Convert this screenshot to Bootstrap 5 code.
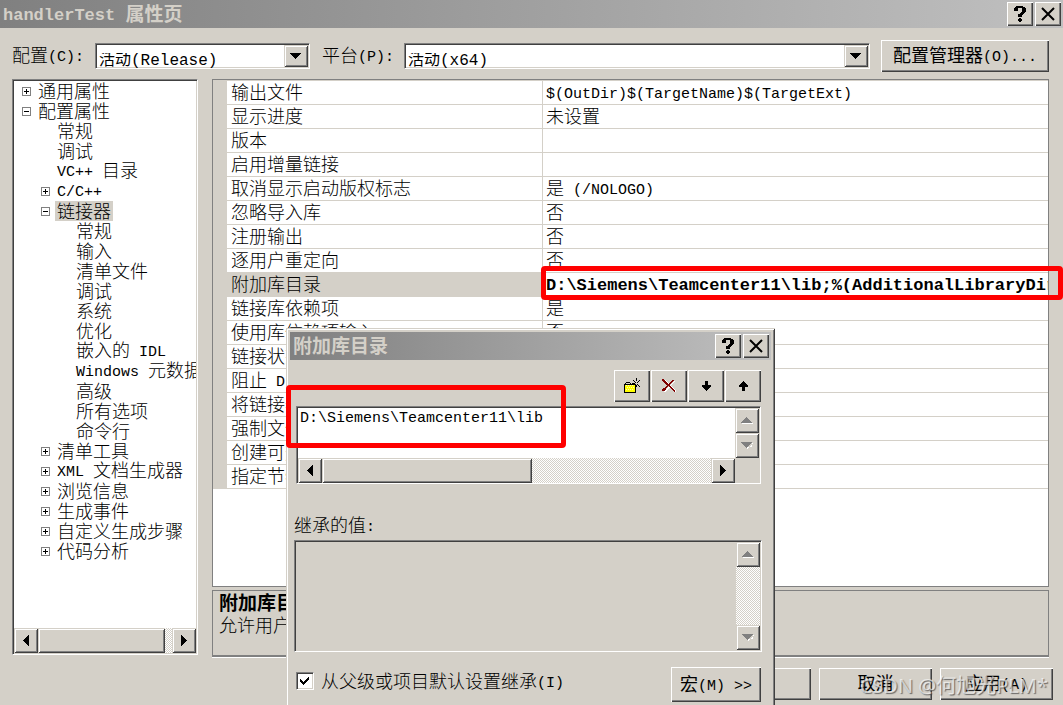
<!DOCTYPE html>
<html lang="zh-CN">
<head>
<meta charset="utf-8">
<meta name="viewport" content="width=device-width, initial-scale=1">
<title>handlerTest 属性页</title>
<link href="https://cdn.jsdelivr.net/npm/bootstrap@5.3.0/dist/css/bootstrap.min.css" rel="stylesheet">
<style>
:root { --face:#d4d0c8; --shade:#808080; --dark:#404040; --cjk:"Noto Sans CJK SC",sans-serif; --mono:"Liberation Mono","Noto Sans CJK SC",monospace; }
body { background:var(--face); color:#000; font-family:var(--cjk); font-size:18px; font-weight:300; line-height:24px; }
button, select, textarea, input { border-radius:0; color:#000; }
.lat { font-family:var(--mono); font-size:15px; line-height:1; white-space:pre; vertical-align:1px; }
.strong-text { font-weight:700; font-size:19px; }
.strong-text .lat, .lat.strong-val { font-size:17px; font-weight:700; }
.app-window { height:100vh; min-height:600px; }

/* caption bars */
.caption { height:28px; background:linear-gradient(90deg,#808080,#c0c0c0); color:var(--face); padding:0 2px 0 3px; flex:none; }
.caption .strong-text { padding-bottom:2px; }
.cap-btns { gap:2px; }
.cap-btn { width:26px; height:24px; }

/* raised controls */
.raised { background:var(--face); border:0; padding:0; box-shadow:inset 1px 1px #fff, inset -1px -1px var(--dark), inset -2px -2px var(--shade); display:flex; align-items:center; justify-content:center; flex:none; white-space:nowrap; }
.raised-soft { box-shadow:inset 1px 1px var(--face), inset -1px -1px var(--dark), inset 2px 2px #fff, inset -2px -2px var(--shade); }
.sunken { border:1px solid; border-color:var(--shade) #fff #fff var(--shade); box-shadow:inset 1px 1px var(--dark), inset -1px -1px var(--face); padding:1px; }
.push { height:32px; width:113px; padding-bottom:4px; }
.scroll-btn { width:24px; height:25px; }
.track { background:repeating-conic-gradient(#fff 0 25%,var(--face) 0 50%) 0 0/2px 2px; }
svg { display:block; shape-rendering:crispEdges; }

/* drop-downs */
.toolbar-row { height:51px; padding:4px 14px 0 12px; }
.toolbar-row label { padding-bottom:3px; }
.toolbar-row .manager { width:168px; margin-left:11px; }
.lbl-a { width:83px; }
.lbl-b { width:82px; margin-left:12px; }
.combo { position:relative; height:26px; background:#fff; }
.combo-a { width:215px; flex:none; }
.combo select { appearance:none; border:0; background:transparent; width:100%; height:100%; padding:0 26px 6px 2px; font:16px/16px var(--mono); outline:0; }
.combo .drop { position:absolute; right:1px; top:1px; bottom:1px; width:24px; pointer-events:none; }

/* tree */
.work { padding:0 14px 0 12px; gap:14px; min-height:0; }
.tree-pane { width:186px; background:#fff; margin-bottom:2px; flex:none; }
.tree { overflow:hidden; }
.tree ul { padding-left:19px; list-style:none; margin:0; }
.tree > ul { padding-left:8px; }
.node { display:flex; align-items:center; height:20px; gap:5px; white-space:nowrap; }
.node a { color:#000; text-decoration:none; padding:0 2px 2px; line-height:18px; }
.node a.picked { background:var(--face); }
.leaf { padding-left:14px; }
.tw { width:9px; height:9px; padding:0; border:1px solid var(--shade); background:#fff; flex:none; }

/* property grid */
.grid-pane { border:1px solid var(--shade); background:#fff; min-height:0; }
.props { table-layout:fixed; border-collapse:separate; border-spacing:0; border-top:1px solid var(--face); }
.props th, .props td { height:24px; padding:0 0 2px 4px; line-height:21px; font-weight:300; border-bottom:1px solid var(--face); white-space:nowrap; overflow:hidden; }
.props th { border-right:1px solid var(--face); }
.props td.gutter { background:var(--face); padding:0; }
.props tr.current th { background:var(--face); }
.props td { padding-left:3px; }
.help-pane { height:67px; margin-top:3px; border:1px solid var(--shade); border-bottom:2px solid var(--shade); box-shadow:0 1px #fff; padding:0 6px; line-height:22px; flex:none; overflow:hidden; white-space:nowrap; }
.foot { height:48px; padding:11px 10px 0 0; gap:8px; flex:none; }

/* list editor dialog */
.editor { position:absolute; left:286px; top:328px; bottom:0; width:489px; background:var(--face); padding:4px 4px 0; box-shadow:inset 1px 1px var(--face), inset -1px 0 var(--dark), inset 2px 2px #fff, inset -2px 0 var(--shade); overflow:hidden; }
.ed-body { padding:10px 10px 0 6px; }
.tool { width:36px; height:32px; }
.editor textarea { border:0; resize:none; outline:0; background:transparent; font:15px/21px var(--mono); padding:0 2px; overflow:hidden; }
.list-box { height:78px; margin-left:4px; background:#fff; }
.ed-body .list-box { margin-left:0; }
.corner { width:24px; background:var(--face); flex:none; }
.inh-label { margin-top:28px; margin-left:-2px; }
.inherited { height:112px; margin-top:4px; margin-left:-2px; margin-right:-1px; }
.inherit-row { margin-top:15px; }
.check-line { height:28px; gap:7px; }
.check-line label { padding-bottom:2px; }
.tick { appearance:none; width:18px; height:18px; background:#fff url("data:image/svg+xml,%3Csvg xmlns='http://www.w3.org/2000/svg' viewBox='0 0 18 18' shape-rendering='crispEdges'%3E%3Cpath d='M4 7h1v1h1v1h1v1h1V9h1V8h1V7h1V6h1V5h1v3h-1v1h-1v1h-1v1H9v1H8v1H7v-1H6v-1H5v-1H4z'/%3E%3C/svg%3E") -1px -1px/18px 18px no-repeat; }
.macro { width:90px; height:35px; padding-bottom:4px; }

/* markers and watermark */
.marker { position:absolute; border:5px solid #f00; border-radius:4px; pointer-events:none; }
.marker-value { left:328px; right:-15px; top:186px; height:34px; }
.marker-path { left:286px; top:385px; width:280px; height:63px; }
.watermark { position:absolute; right:15px; bottom:7px; font:400 20px/24px "Noto Sans","Noto Sans CJK SC",sans-serif; color:rgba(255,255,255,.65); text-shadow:1px 1px 1px rgba(70,70,70,.75); pointer-events:none; }
</style>
<script src="https://cdn.jsdelivr.net/npm/bootstrap@5.3.0/dist/js/bootstrap.bundle.min.js"></script>
</head>
<body class="overflow-hidden">
<svg class="d-none" aria-hidden="true">
  <symbol id="i-help" viewBox="0 0 14 18"><path d="M3 1h7v1h2v1h1v4h-1v1h-1v1h-1v1H9v2H5V9h2V8h1V7h1V3H5v3H1V3h1V2h1zM5 14h1v-1h2v1h1v2H8v1H6v-1H5z"/></symbol>
  <symbol id="i-close" viewBox="0 0 14 14"><path d="M1 1l12 12M13 1L1 13" stroke="#000" stroke-width="2" shape-rendering="auto"/></symbol>
  <symbol id="i-down" viewBox="0 0 12 6"><path d="M0 0h11v1h-1v1H9v1H8v1H7v1H6v1H5V5H4V4H3V3H2V2H1V1H0z"/></symbol>
  <symbol id="i-left" viewBox="0 0 6 12"><path d="M6 0v11H5v-1H4V9H3V8H2V7H1V6H0V5h1V4h1V3h1V2h1V1h1V0z"/></symbol>
  <symbol id="i-right" viewBox="0 0 6 12"><path d="M0 0v11h1v-1h1V9h1V8h1V7h1V6h1V5H5V4H4V3H3V2H2V1H1V0z"/></symbol>
  <symbol id="i-up-off" viewBox="0 0 12 8"><path fill="#fff" d="M1 6h11v1H1z"/><path fill="#808080" d="M5 0h1v1h1v1h1v1h1v1h1v1h1v1H0V5h1V4h1V3h1V2h1V1h1z"/></symbol>
  <symbol id="i-down-off" viewBox="0 0 12 8"><path fill="#fff" d="M11 1h1v1h-1v1h-1v1H9v1H8v1H7v1H6V6H5V5h6z"/><path fill="#808080" d="M0 0h11v1h-1v1H9v1H8v1H7v1H6v1H5V5H4V4H3V3H2V2H1V1H0z"/></symbol>
  <symbol id="i-plus" viewBox="0 0 7 7"><path d="M1 3h2V1h1v2h2v1H4v2H3V4H1z"/></symbol>
  <symbol id="i-minus" viewBox="0 0 7 7"><path d="M1 3h5v1H1z"/></symbol>
</svg>

<div class="app-window d-flex flex-column position-relative">
  <header class="caption d-flex align-items-center">
    <div class="strong-text me-auto"><span class="lat">handlerTest </span>属性页</div>
    <div class="cap-btns d-flex">
      <button class="raised cap-btn" type="button" aria-label="帮助"><svg width="14" height="18"><use href="#i-help"/></svg></button>
      <button class="raised cap-btn" type="button" aria-label="关闭"><svg width="14" height="14"><use href="#i-close"/></svg></button>
    </div>
  </header>

  <div class="toolbar-row d-flex align-items-center flex-shrink-0">
    <label class="lbl-a" for="cfg">配置<span class="lat">(C):</span></label>
    <div class="combo sunken combo-a">
      <select id="cfg"><option>活动(Release)</option></select>
      <span class="raised raised-soft drop"><svg width="12" height="6"><use href="#i-down"/></svg></span>
    </div>
    <label class="lbl-b" for="plat">平台<span class="lat">(P):</span></label>
    <div class="combo sunken flex-grow-1">
      <select id="plat"><option>活动(x64)</option></select>
      <span class="raised raised-soft drop"><svg width="12" height="6"><use href="#i-down"/></svg></span>
    </div>
    <button class="raised push manager" type="button"><span>配置管理器<span class="lat">(O)...</span></span></button>
  </div>

  <main class="work d-flex flex-grow-1">
    <nav class="tree-pane sunken d-flex flex-column" aria-label="属性类别">
      <div class="tree flex-grow-1">
        <ul>
          <li><div class="node"><button class="tw" type="button" aria-label="展开"><svg width="7" height="7"><use href="#i-plus"/></svg></button><a href="#">通用属性</a></div></li>
          <li><div class="node"><button class="tw" type="button" aria-label="折叠"><svg width="7" height="7"><use href="#i-minus"/></svg></button><a href="#">配置属性</a></div>
            <ul>
              <li class="node leaf"><a href="#">常规</a></li>
              <li class="node leaf"><a href="#">调试</a></li>
              <li class="node leaf"><a href="#"><span class="lat">VC++ </span>目录</a></li>
              <li class="node"><button class="tw" type="button" aria-label="展开"><svg width="7" height="7"><use href="#i-plus"/></svg></button><a href="#"><span class="lat">C/C++</span></a></li>
              <li><div class="node"><button class="tw" type="button" aria-label="折叠"><svg width="7" height="7"><use href="#i-minus"/></svg></button><a class="picked" href="#">链接器</a></div>
                <ul>
                  <li class="node leaf"><a href="#">常规</a></li>
                  <li class="node leaf"><a href="#">输入</a></li>
                  <li class="node leaf"><a href="#">清单文件</a></li>
                  <li class="node leaf"><a href="#">调试</a></li>
                  <li class="node leaf"><a href="#">系统</a></li>
                  <li class="node leaf"><a href="#">优化</a></li>
                  <li class="node leaf"><a href="#">嵌入的<span class="lat"> IDL</span></a></li>
                  <li class="node leaf"><a href="#"><span class="lat">Windows </span>元数据</a></li>
                  <li class="node leaf"><a href="#">高级</a></li>
                  <li class="node leaf"><a href="#">所有选项</a></li>
                  <li class="node leaf"><a href="#">命令行</a></li>
                </ul>
              </li>
              <li class="node"><button class="tw" type="button" aria-label="展开"><svg width="7" height="7"><use href="#i-plus"/></svg></button><a href="#">清单工具</a></li>
              <li class="node"><button class="tw" type="button" aria-label="展开"><svg width="7" height="7"><use href="#i-plus"/></svg></button><a href="#"><span class="lat">XML </span>文档生成器</a></li>
              <li class="node"><button class="tw" type="button" aria-label="展开"><svg width="7" height="7"><use href="#i-plus"/></svg></button><a href="#">浏览信息</a></li>
              <li class="node"><button class="tw" type="button" aria-label="展开"><svg width="7" height="7"><use href="#i-plus"/></svg></button><a href="#">生成事件</a></li>
              <li class="node"><button class="tw" type="button" aria-label="展开"><svg width="7" height="7"><use href="#i-plus"/></svg></button><a href="#">自定义生成步骤</a></li>
              <li class="node"><button class="tw" type="button" aria-label="展开"><svg width="7" height="7"><use href="#i-plus"/></svg></button><a href="#">代码分析</a></li>
            </ul>
          </li>
        </ul>
      </div>
      <div class="track d-flex flex-shrink-0">
        <button class="raised raised-soft scroll-btn" type="button" aria-label="向左滚动"><svg width="6" height="12"><use href="#i-left"/></svg></button>
        <div class="raised raised-soft" style="width:70%"></div>
        <button class="raised raised-soft scroll-btn ms-auto" type="button" aria-label="向右滚动"><svg width="6" height="12"><use href="#i-right"/></svg></button>
      </div>
    </nav>

    <section class="d-flex flex-column flex-grow-1 overflow-visible" style="min-width:0">
      <div class="grid-pane flex-grow-1 position-relative">
        <table class="props w-100">
          <colgroup><col style="width:14px"><col style="width:316px"><col></colgroup>
          <tbody>
            <tr><td class="gutter"></td><th scope="row">输出文件</th><td><span class="lat">$(OutDir)$(TargetName)$(TargetExt)</span></td></tr>
            <tr><td class="gutter"></td><th scope="row">显示进度</th><td>未设置</td></tr>
            <tr><td class="gutter"></td><th scope="row">版本</th><td></td></tr>
            <tr><td class="gutter"></td><th scope="row">启用增量链接</th><td></td></tr>
            <tr><td class="gutter"></td><th scope="row">取消显示启动版权标志</th><td>是<span class="lat"> (/NOLOGO)</span></td></tr>
            <tr><td class="gutter"></td><th scope="row">忽略导入库</th><td>否</td></tr>
            <tr><td class="gutter"></td><th scope="row">注册输出</th><td>否</td></tr>
            <tr><td class="gutter"></td><th scope="row">逐用户重定向</th><td>否</td></tr>
            <tr class="current"><td class="gutter"></td><th scope="row">附加库目录</th><td><span class="lat strong-val">D:\Siemens\Teamcenter11\lib;%(AdditionalLibraryDirectories)</span></td></tr>
            <tr><td class="gutter"></td><th scope="row">链接库依赖项</th><td>是</td></tr>
            <tr><td class="gutter"></td><th scope="row">使用库依赖项输入</th><td>否</td></tr>
            <tr><td class="gutter"></td><th scope="row">链接状态</th><td></td></tr>
            <tr><td class="gutter"></td><th scope="row">阻止<span class="lat"> Dll </span>绑定</th><td></td></tr>
            <tr><td class="gutter"></td><th scope="row">将链接器警告视为错误</th><td></td></tr>
            <tr><td class="gutter"></td><th scope="row">强制文件输出</th><td></td></tr>
            <tr><td class="gutter"></td><th scope="row">创建可热修补映像</th><td></td></tr>
            <tr><td class="gutter"></td><th scope="row">指定节特性</th><td></td></tr>
          </tbody>
        </table>
        <div class="marker marker-value"></div>
      </div>
      <div class="help-pane">
        <div class="strong-text">附加库目录</div>
        <div>允许用户重写环境库路径</div>
      </div>
    </section>
  </main>

  <footer class="foot d-flex justify-content-end">
    <button class="raised push" type="button" aria-label="确定"></button>
    <button class="raised push" type="button">取消</button>
    <button class="raised push" type="button"><span>应用<span class="lat">(A)</span></span></button>
  </footer>

  <section class="editor" role="dialog" aria-labelledby="ed-title">
    <div class="caption d-flex align-items-center">
      <div id="ed-title" class="strong-text me-auto">附加库目录</div>
      <div class="cap-btns d-flex">
        <button class="raised cap-btn" type="button" aria-label="帮助"><svg width="14" height="18"><use href="#i-help"/></svg></button>
        <button class="raised cap-btn" type="button" aria-label="关闭"><svg width="14" height="14"><use href="#i-close"/></svg></button>
      </div>
    </div>
    <div class="ed-body">
      <div class="d-flex justify-content-end" style="gap:1px">
        <button class="raised tool" type="button" aria-label="新行"><svg width="16" height="16" viewBox="0 0 16 16"><path fill="#ff0" d="M1 6h11v8H1z"/><path fill="#fff" opacity=".7" d="M2 7h1v1H2zM4 7h1v1H4zM6 7h1v1H6zM8 7h1v1H8zM3 9h1v1H3zM5 9h1v1H5zM7 9h1v1H7zM9 9h1v1H9zM2 11h1v1H2zM4 11h1v1H4zM6 11h1v1H6zM8 11h1v1H8z"/><path d="M1 5h1V4h4v1h1v1h5v9H0V6h1zM1 7v7h10V7zM2 5v1h4V5z" fill-rule="evenodd"/><path d="M12 0h1v3h-1zM9 2h1v1H9zM10 3h1v1h-1zM8 5h3v1H8zM14 3h1v1h-1zM15 2h1v1h-1zM13 4h1v1h-1zM11 4h1v1h-1zM13 6h1v1h-1zM14 7h1v1h-1zM15 8h1v1h-1zM13 9h-1V7h1z"/></svg></button>
        <button class="raised tool" type="button" aria-label="删除"><svg width="14" height="14" viewBox="0 0 14 14"><path fill="#fff" d="M3 1l5 5 5-5v1L9 6l5 6v1L8 8l-5 5H2l5-6z"/><path fill="#800000" d="M0 0h2v1h1v1h1v1h1v1h1v1h1V4h1V3h1V2h1V1h2v1h-1v1h-1v1H9v1H8v2h1v1h1v1h1v1h1v1h1v2h-1v-1h-1v-1h-1v-1H9V9H8V8H7V7H6v1H5v1H4v2H3v1H0v-2h1V9h2V8h1V7h1V6H4V5H3V4H2V3H1V2H0z"/></svg></button>
        <button class="raised tool" type="button" aria-label="下移"><svg width="9" height="10" viewBox="0 0 9 10"><path d="M3 0h3v4h3v2H8v1H7v1H6v1H5v1H4V9H3V8H2V7H1V6H0V4h3z"/></svg></button>
        <button class="raised tool" type="button" aria-label="上移"><svg width="9" height="10" viewBox="0 0 9 10"><path d="M3 10h3V6h3V4H8V3H7V2H6V1H5V0H4v1H3v1H2v1H1v1H0v2h3z"/></svg></button>
      </div>
      <div class="list-box sunken d-flex flex-column mt-1">
        <div class="d-flex flex-grow-1">
          <textarea class="flex-grow-1" rows="2" aria-label="库目录">D:\Siemens\Teamcenter11\lib</textarea>
          <div class="track d-flex flex-column justify-content-between">
            <button class="raised raised-soft scroll-btn" type="button" aria-label="向上滚动"><svg width="12" height="8"><use href="#i-up-off"/></svg></button>
            <button class="raised raised-soft scroll-btn" type="button" aria-label="向下滚动"><svg width="12" height="8"><use href="#i-down-off"/></svg></button>
          </div>
        </div>
        <div class="d-flex">
          <div class="track d-flex flex-grow-1">
            <button class="raised raised-soft scroll-btn" type="button" aria-label="向左滚动"><svg width="6" height="12"><use href="#i-left"/></svg></button>
            <div class="raised raised-soft" style="width:48%"></div>
            <button class="raised raised-soft scroll-btn ms-auto" type="button" aria-label="向右滚动"><svg width="6" height="12"><use href="#i-right"/></svg></button>
          </div>
          <div class="corner"></div>
        </div>
      </div>
      <label class="inh-label d-block" for="inh">继承的值<span class="lat">:</span></label>
      <div class="inherited sunken d-flex">
        <textarea id="inh" class="flex-grow-1" readonly></textarea>
        <div class="track d-flex flex-column justify-content-between">
          <button class="raised raised-soft scroll-btn" type="button" aria-label="向上滚动"><svg width="12" height="8"><use href="#i-up-off"/></svg></button>
          <button class="raised raised-soft scroll-btn" type="button" aria-label="向下滚动"><svg width="12" height="8"><use href="#i-down-off"/></svg></button>
        </div>
      </div>
      <div class="inherit-row d-flex justify-content-between align-items-start">
        <div class="check-line d-flex align-items-center">
          <input class="tick sunken" type="checkbox" id="inherit" checked>
          <label for="inherit">从父级或项目默认设置继承<span class="lat">(I)</span></label>
        </div>
        <button class="raised macro" type="button"><span>宏<span class="lat">(M) &gt;&gt;</span></span></button>
      </div>
    </div>
  </section>
  <div class="marker marker-path"></div>
  <div class="watermark">CSDN @何旭光PLM*</div>
</div>
</body>
</html>
